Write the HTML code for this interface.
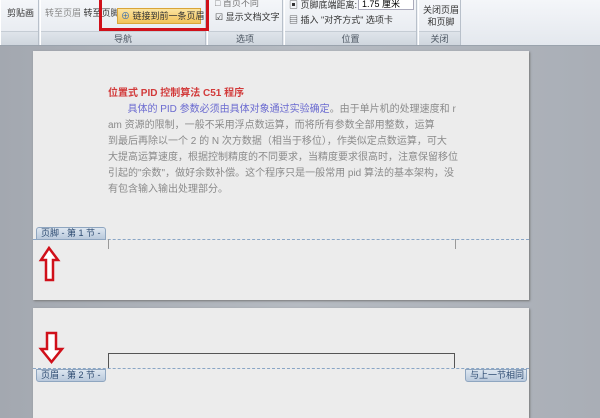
<!DOCTYPE html>
<html><head><meta charset="utf-8"><style>
*{margin:0;padding:0;box-sizing:border-box}
body{width:600px;height:405px;overflow:hidden;position:relative;background:linear-gradient(90deg,#a3a8b0,#b6bbc2 50%,#a9aeb6);font-family:"Liberation Sans","Noto Sans CJK SC",sans-serif;}
.rib{position:absolute;left:0;top:0;width:600px;height:46px;background:linear-gradient(#f4f6f9,#e4e8ee);border-bottom:1px solid #9aa3ad}
.grp{position:absolute;top:0;height:45px;border-right:1px solid #b8c0ca;border-left:1px solid #fff}
.lab{position:absolute;left:0;right:0;bottom:0;height:14px;background:linear-gradient(#dfe4ea,#cfd6de);font-size:9px;color:#4a5460;text-align:center;line-height:14px;border-top:1px solid #c5ccd4}
.t{position:absolute;font-size:9px;color:#333;white-space:nowrap}
.page{position:absolute;left:33px;width:496px;background:#ececec;box-shadow:1px 1px 2px #777}
.txt{position:absolute;left:108px;font-size:10px;color:#8a8a8a;white-space:nowrap;line-height:16px}
.tag{position:absolute;height:13px;background:linear-gradient(#dde6f0,#b9c9dc);border:1px solid #8fa6c0;border-radius:0 0 3px 3px;font-size:9px;color:#2c4a70;line-height:11px;padding:0 4px;white-space:nowrap}
.dash{position:absolute;left:33px;width:496px;border-top:1px dashed #8aa6c6}
</style></head><body>
<div class="rib">
 <div class="grp" style="left:0;width:39px"><div class="t" style="left:6px;top:6px">剪贴画</div><div class="lab"></div></div>
 <div class="grp" style="left:40px;width:166px"><div class="t" style="left:4px;top:6px;color:#888">转至页眉 <span style="color:#333">转至页脚</span></div><div class="lab">导航</div></div>
 <div class="grp" style="left:207px;width:76px"><div class="t" style="left:7px;top:10px">☑ 显示文档文字</div><div class="t" style="left:7px;top:-4px;color:#777">□ 首页不同</div><div class="lab">选项</div></div>
 <div class="grp" style="left:284px;width:133px"><div class="t" style="left:4px;top:-2px">▣ 页脚底端距离:</div><div style="position:absolute;left:73px;top:-2px;width:56px;height:12px;border:1px solid #aab;background:#fff;font-size:9px;padding-left:3px;line-height:10px">1.75 厘米</div><div class="t" style="left:4px;top:13px">▤ 插入 "对齐方式" 选项卡</div><div class="lab">位置</div></div>
 <div class="grp" style="left:418px;width:43px"><div class="t" style="left:4px;top:4px;text-align:center;line-height:12px">关闭页眉<br>和页脚</div><div class="lab">关闭</div></div>
</div>
<div style="position:absolute;left:99px;top:-3px;width:110px;height:34px;border:3px solid #d0101a"></div>
<div style="position:absolute;left:117px;top:8px;width:84px;height:16px;background:linear-gradient(#fbe3a0,#f1c25a);border:1px solid #d9a53a;font-size:9px;color:#333;line-height:14px;padding-left:3px;white-space:nowrap"><span style="color:#3a6fb0">⊕</span> 链接到前一条页眉</div>

<div class="page" style="top:51px;height:249px"></div>
<div class="page" style="top:308px;height:110px"></div>

<div class="txt" style="top:86px;color:#d23a3a;font-weight:bold">位置式 PID 控制算法 C51 程序</div>
<div class="txt" style="top:102px"><span style="color:#6a6ad0">&nbsp;&nbsp;&nbsp;&nbsp;&nbsp;&nbsp;&nbsp;具体的 PID 参数必须由具体对象通过实验确定</span>。由于单片机的处理速度和 r</div>
<div class="txt" style="top:118px">am 资源的限制，一般不采用浮点数运算，而将所有参数全部用整数，运算</div>
<div class="txt" style="top:134px">到最后再除以一个 2 的 N 次方数据（相当于移位），作类似定点数运算，可大</div>
<div class="txt" style="top:150px">大提高运算速度，根据控制精度的不同要求，当精度要求很高时，注意保留移位</div>
<div class="txt" style="top:166px">引起的"余数"，做好余数补偿。这个程序只是一般常用 pid 算法的基本架构，没</div>
<div class="txt" style="top:182px">有包含输入输出处理部分。</div>

<div class="dash" style="top:239px"></div>
<div class="tag" style="left:36px;top:227px;border-radius:3px 3px 0 0">页脚 - 第 1 节 -</div>
<div style="position:absolute;left:108px;top:239px;height:10px;border-left:1px solid #999"></div>
<div style="position:absolute;left:455px;top:239px;height:10px;border-left:1px solid #999"></div>
<svg style="position:absolute;left:38px;top:246px" width="24" height="38"><path d="M11 2 L20 14 L15 14 L15 34 L8 34 L8 14 L3 14 Z" fill="#fff" stroke="#d0101a" stroke-width="2.5"/></svg>

<svg style="position:absolute;left:38px;top:331px" width="28" height="34"><path d="M9 2 L18 2 L18 18 L24 18 L13.5 31 L3 18 L9 18 Z" fill="#fff" stroke="#d0101a" stroke-width="2.5"/></svg>
<div style="position:absolute;left:108px;top:353px;width:347px;height:15px;border:1px solid #555;border-bottom:none"></div>
<div class="dash" style="top:368px"></div>
<div class="tag" style="left:36px;top:369px">页眉 - 第 2 节 -</div>
<div class="tag" style="left:465px;top:369px;width:62px">与上一节相同</div>
</body></html>
